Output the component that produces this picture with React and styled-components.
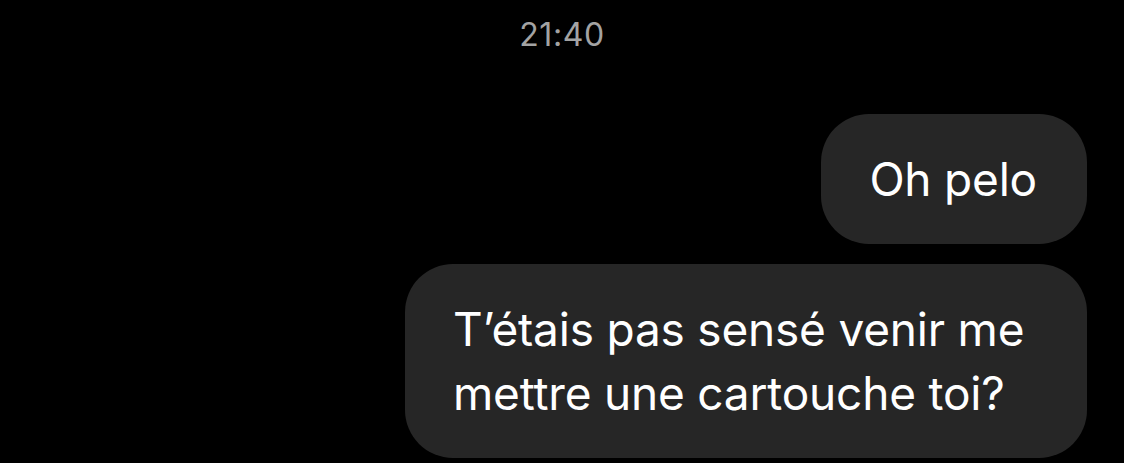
import styled, { createGlobalStyle } from "styled-components";

const GlobalStyle = createGlobalStyle`
  html, body {
    margin: 0;
    padding: 0;
    background: #000;
  }
  body {
    font-family: Inter, "Liberation Sans", sans-serif;
  }
`;

const Screen = styled.div`
  width: 1124px;
  height: 463px;
  background: #000;
  display: flex;
  flex-direction: column;
  overflow: hidden;
`;

const Timestamp = styled.div`
  height: 68px;
  display: flex;
  align-items: center;
  justify-content: center;
  color: #a3a3a3;
  font-size: 32px;
  letter-spacing: 0.6px;
`;

const Thread = styled.div`
  display: flex;
  flex-direction: column;
  align-items: flex-end;
  gap: 20px;
  padding: 46px 37px 0 0;
`;

const Bubble = styled.div`
  box-sizing: border-box;
  max-width: ${(props) => props.maxWidth || "682px"};
  background: #262626;
  color: #fff;
  border-radius: 48px;
  padding: 33px 50px 33px 48px;
  font-size: 46px;
  line-height: 64px;
  letter-spacing: -0.2px;
`;

const messages = [
  { id: 1, text: "Oh pelo" },
  { id: 2, text: "T\u2019\u00e9tais pas sens\u00e9 venir me mettre une cartouche toi?" },
];

const App = () => {
  return (
    <>
      <GlobalStyle />
      <Screen>
        <Timestamp>21:40</Timestamp>
        <Thread>
          {messages.map((m) => (
            <Bubble key={m.id}>{m.text}</Bubble>
          ))}
        </Thread>
      </Screen>
    </>
  );
};

export default App;
